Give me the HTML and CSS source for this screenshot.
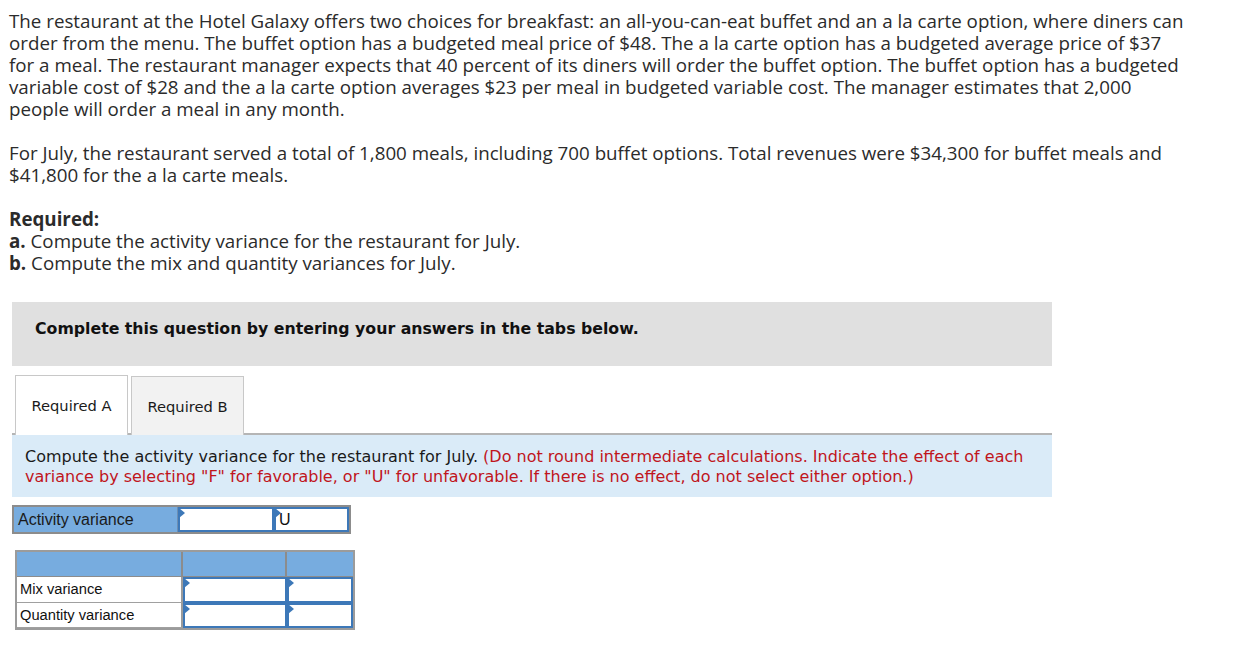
FILE: index.html
```html
<!DOCTYPE html>
<html>
<head>
<meta charset="utf-8">
<link rel="stylesheet" href="styles.css">
</head>
<body>
<div class="problem">
  <p class="para">The restaurant at the Hotel Galaxy offers two choices for breakfast: an all-you-can-eat buffet and an a la carte option, where diners can<br>order from the menu. The buffet option has a budgeted meal price of $48. The a la carte option has a budgeted average price of $37<br>for a meal. The restaurant manager expects that 40 percent of its diners will order the buffet option. The buffet option has a budgeted<br>variable cost of $28 and the a la carte option averages $23 per meal in budgeted variable cost. The manager estimates that 2,000<br>people will order a meal in any month.</p>
  <p class="para">For July, the restaurant served a total of 1,800 meals, including 700 buffet options. Total revenues were $34,300 for buffet meals and<br>$41,800 for the a la carte meals.</p>
  <p class="para"><b>Required:</b><br><b>a.</b> Compute the activity variance for the restaurant for July.<br><b>b.</b> Compute the mix and quantity variances for July.</p>
</div>

<div class="question">
  <div class="notice">Complete this question by entering your answers in the tabs below.</div>
  <div class="tabs">
    <div class="tab active">Required A</div>
    <div class="tab">Required B</div>
  </div>
  <div class="instructions">Compute the activity variance for the restaurant for July. <span class="red">(Do not round intermediate calculations. Indicate the effect of each<br>variance by selecting "F" for favorable, or "U" for unfavorable. If there is no effect, do not select either option.)</span></div>

  <div class="activity">
    <div class="lbl">Activity variance</div>
    <div class="inp"><span class="flag"></span></div>
    <div class="inp"><span class="flag"></span>U</div>
  </div>

  <div class="mix">
    <div class="hd"></div><div class="hd"></div><div class="hd"></div>
    <div class="plain">Mix variance</div>
    <div class="inp"><span class="flag"></span></div>
    <div class="inp"><span class="flag"></span></div>
    <div class="plain">Quantity variance</div>
    <div class="inp"><span class="flag"></span></div>
    <div class="inp"><span class="flag"></span></div>
  </div>
</div>
</body>
</html>
```

FILE: styles.css
```css
html, body {
  margin: 0;
  padding: 0;
  background: #fff;
}

.problem {
  padding: 10px 0 0 9px;
  font-family: "Open Sans", "Liberation Sans", sans-serif;
  font-size: 18.75px;
  line-height: 22px;
  color: #2b2b2b;
  white-space: nowrap;
}

.para {
  margin: 0 0 22px 0;
}

.para b {
  font-weight: 700;
}

.question {
  margin-left: 12px;
  width: 1040px;
  margin-top: 28px;
}

.notice {
  background: #e0e0e0;
  height: 64px;
  box-sizing: border-box;
  padding: 17px 0 0 23px;
  font-family: "DejaVu Sans", Verdana, sans-serif;
  font-weight: bold;
  font-size: 15.75px;
  line-height: 20px;
  color: #111;
}

.tabs {
  display: flex;
  gap: 3px;
  margin-top: 9px;
  padding-left: 3px;
  border-bottom: 2px solid #b5b5b5;
  height: 58px;
}

.tab {
  box-sizing: border-box;
  height: 59px;
  width: 113px;
  border: 1px solid #c8c8c8;
  border-bottom: none;
  background: #f2f2f2;
  font-family: "DejaVu Sans", Verdana, sans-serif;
  font-size: 14.7px;
  color: #1a1a1a;
  display: flex;
  align-items: center;
  justify-content: center;
  margin-top: 1px;
}

.tab.active {
  background: #fff;
  height: 60px;
  margin-top: 0;
  position: relative;
  z-index: 1;
}

.instructions {
  background: #daebf8;
  height: 62px;
  box-sizing: border-box;
  padding: 12px 0 0 13px;
  font-family: "DejaVu Sans", Verdana, sans-serif;
  font-size: 16px;
  line-height: 20px;
  color: #1a1a1a;
  white-space: nowrap;
}

.red {
  color: #c0151c;
}

.activity {
  display: grid;
  grid-template-columns: 164px 96px 75px;
  grid-template-rows: 25px;
  width: 335px;
  margin-top: 8px;
  border: 2px solid #8c8c8c;
  font-family: "Liberation Sans", Arial, sans-serif;
}

.activity .lbl {
  background: #77acdf;
  font-size: 16px;
  line-height: 25px;
  color: #1a1a1a;
  padding-left: 4px;
  border-right: 1px solid #6d8fb3;
}

.inp {
  position: relative;
  background: #fff;
  border: 2px solid #3d78b8;
  font-size: 16px;
  line-height: 21px;
  color: #111;
  padding-left: 3px;
}

.flag {
  position: absolute;
  left: -1px;
  top: -1px;
  width: 0;
  height: 0;
  border-top: 5px solid transparent;
  border-bottom: 5px solid transparent;
  border-left: 6px solid #3d78b8;
}

.mix {
  display: grid;
  grid-template-columns: 166px 104px 66px;
  grid-template-rows: 25px 26px 25px;
  width: 336px;
  margin-top: 16px;
  margin-left: 3px;
  border: 2px solid #9b9b9b;
  font-family: "Liberation Sans", Arial, sans-serif;
}

.mix .hd {
  background: #77acdf;
  border-right: 2px solid #8c8c8c;
  border-bottom: 1px solid #8c8c8c;
}

.mix .hd:nth-child(3) {
  border-right: none;
}

.mix .plain {
  border-right: 2px solid #9b9b9b;
  border-bottom: 1px solid #a0a0a0;
  font-size: 14.7px;
  line-height: 24px;
  color: #111;
  padding-left: 3px;
}

.mix .plain:last-of-type {
  border-bottom: none;
}
```
